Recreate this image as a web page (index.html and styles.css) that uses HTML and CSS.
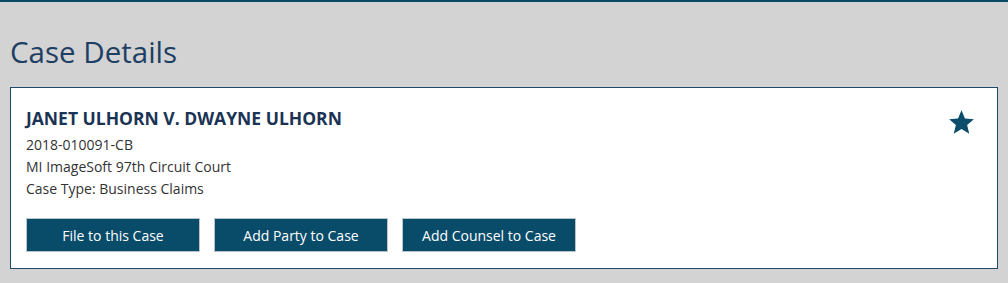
FILE: index.html
```html
<!DOCTYPE html>
<html lang="en">
  <head>
    <meta charset="UTF-8" />
    <meta name="viewport" content="width=device-width, initial-scale=1.0" />
    <title>Case Details</title>
    <link rel="stylesheet" href="styles.css">
  </head>
  <body>
    <div class="topbar"></div>
    <div class="page">
      <h1 class="page-title">Case Details</h1>
      <div class="case-card">
        <div class="case-head">
          <div class="case-info">
            <h2 class="case-name">JANET ULHORN V. DWAYNE ULHORN</h2>
            <div class="case-line">2018-010091-CB</div>
            <div class="case-line">MI ImageSoft 97th Circuit Court</div>
            <div class="case-line">Case Type: Business Claims</div>
          </div>
          <svg class="star" viewBox="0 0 24 24" width="27" height="27">
            <path d="M12 1.2l3.1 7.3 7.9.6-6 5.2 1.9 7.7L12 17.8 5.1 22l1.9-7.7-6-5.2 7.9-.6z" />
          </svg>
        </div>
        <div class="actions">
          <button class="btn">File to this Case</button>
          <button class="btn">Add Party to Case</button>
          <button class="btn">Add Counsel to Case</button>
        </div>
      </div>
    </div>
  </body>
</html>
```

FILE: styles.css
```css
body {
  margin: 0;
  font-family: "Open Sans", Arial, sans-serif;
  background-color: #d3d3d3;
  color: #333;
}
.topbar {
  height: 2px;
  background-color: #0b4a66;
}
.page {
  padding: 0 10px;
}
.page-title {
  margin: 0 0 15px 0;
  padding-top: 30px;
  font-size: 29.5px;
  font-weight: normal;
  line-height: 40px;
  color: #1d3f63;
}
.case-card {
  background-color: #fff;
  border: 1px solid #1d4a68;
  padding: 18px 15px 16px 15px;
}
.case-head {
  display: flex;
  justify-content: space-between;
  align-items: flex-start;
}
.case-name {
  margin: 0 0 4px 0;
  font-size: 17.5px;
  font-weight: bold;
  line-height: 24px;
  color: #1b3354;
}
.case-line {
  font-size: 14px;
  line-height: 22px;
  color: #333;
}
.star {
  fill: #0b4d6b;
  margin: 3px 7px 0 0;
}
.actions {
  display: flex;
  gap: 14px;
  margin-top: 18px;
}
.btn {
  width: 174px;
  height: 34px;
  font-family: "Open Sans", Arial, sans-serif;
  font-size: 14px;
  color: #fff;
  background-color: #084c6a;
  border: 1px solid #b9c4cb;
  cursor: pointer;
}
```
